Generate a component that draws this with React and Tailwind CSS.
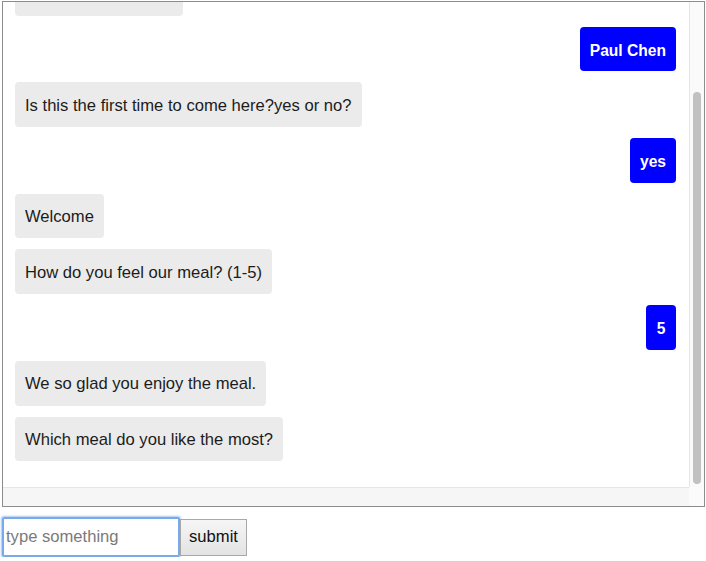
import { useState } from "react";

const messages = [
  { id: 1, from: "bot", text: "What is your name?" },
  { id: 2, from: "me", text: "Paul Chen" },
  { id: 3, from: "bot", text: "Is this the first time to come here?yes or no?" },
  { id: 4, from: "me", text: "yes" },
  { id: 5, from: "bot", text: "Welcome" },
  { id: 6, from: "bot", text: "How do you feel our meal? (1-5)" },
  { id: 7, from: "me", text: "5" },
  { id: 8, from: "bot", text: "We so glad you enjoy the meal." },
  { id: 9, from: "bot", text: "Which meal do you like the most?" },
];

const Bubble = ({ from, text }) => {
  if (from === "me") {
    return (
      <div className="flex justify-end">
        <div className="flex h-[44.7px] min-w-[30px] items-center justify-center rounded-[4px] bg-[#0000ff] px-[10px] pt-[3px] text-[15.6px] font-bold text-white">
          {text}
        </div>
      </div>
    );
  }

  return (
    <div className="flex justify-start">
      <div className="flex h-[44.7px] items-center rounded-[4px] bg-[#ebebeb] px-[10px] pt-[3px] text-[16.6px] text-[#1c1c1c]">
        {text}
      </div>
    </div>
  );
};

export default function App() {
  const [value, setValue] = useState("");

  return (
    <div className="font-['Liberation_Sans',Arial,sans-serif] bg-white">
      <div className="ml-[2px] mt-[1px] grid h-[506px] w-[703px] grid-cols-[1fr_15px] grid-rows-[1fr_19px] border border-[#8c8c8c]">
        <div className="overflow-hidden pl-[12px] pr-[13px]">
          <div className="mt-[-31px] flex flex-col gap-[11px]">
            {messages.map((message) => (
              <Bubble key={message.id} from={message.from} text={message.text} />
            ))}
          </div>
        </div>

        <div className="border-l border-[#e6e6e6] bg-[#fafafa]">
          <div className="mx-auto mt-[90px] h-[392px] w-[8px] rounded-full bg-[#c1c1c1]" />
        </div>

        <div className="border-t border-[#e6e6e6] bg-[#f6f6f6]" />
        <div className="bg-[#fbfbfb]" />
      </div>

      <form
        className="ml-[2px] mt-[10px] flex items-center"
        onSubmit={(event) => {
          event.preventDefault();
          setValue("");
        }}
      >
        <input
          value={value}
          onChange={(event) => setValue(event.target.value)}
          placeholder="type something"
          className="h-[40px] w-[178px] rounded-[2px] border-2 border-[#78aaeb] px-[2px] text-[16.6px] text-[#222] shadow-[0_0_2px_1px_#a9c9f2] outline-none placeholder:text-[#7a7a7a]"
        />
        <button
          type="submit"
          className="h-[37px] w-[67px] border border-[#a8a8a8] bg-[linear-gradient(#f6f6f6,#e3e3e3)] text-[16.6px] text-[#111]"
        >
          submit
        </button>
      </form>
    </div>
  );
}
